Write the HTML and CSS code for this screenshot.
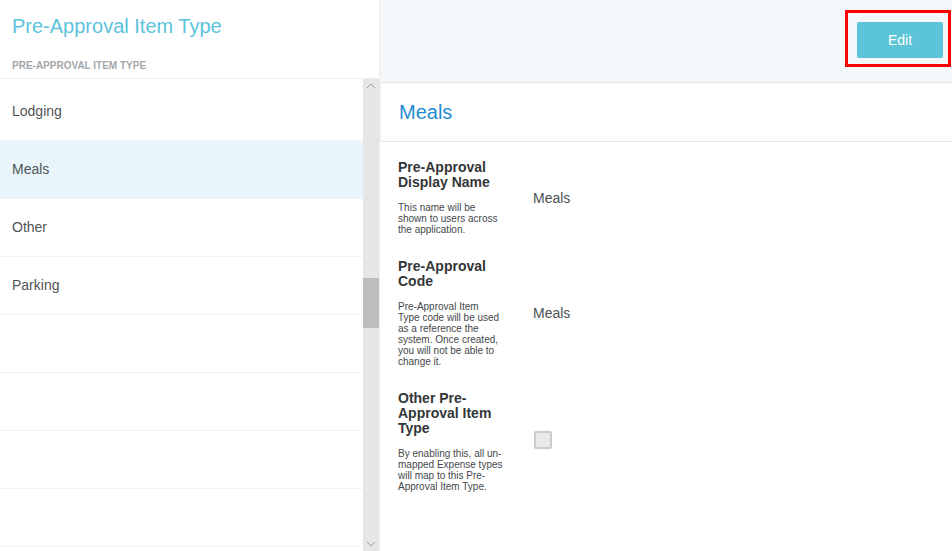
FILE: index.html
```html
<!DOCTYPE html>
<html lang="en">
<head>
<meta charset="utf-8">
<title>Pre-Approval Item Type</title>
<link rel="stylesheet" href="styles.css">
</head>
<body>
<div class="app">
  <aside class="sidebar">
    <header class="sidebar-head">
      <h1 class="sidebar-title">Pre-Approval Item Type</h1>
      <div class="sidebar-caption">PRE-APPROVAL ITEM TYPE</div>
    </header>
    <div class="list-wrap">
      <ul class="list">
        <li class="row">Lodging</li>
        <li class="row selected">Meals</li>
        <li class="row">Other</li>
        <li class="row">Parking</li>
        <li class="row"></li>
        <li class="row"></li>
        <li class="row"></li>
        <li class="row"></li>
      </ul>
      <div class="scrollbar">
        <svg class="arrow" width="16" height="14" viewBox="0 0 16 14"><path d="M4 9 L8 5 L12 9" fill="none" stroke="#9a9a9a" stroke-width="1"/></svg>
        <div class="thumb"></div>
        <div class="track-fill"></div>
        <svg class="arrow" width="16" height="14" viewBox="0 0 16 14"><path d="M4 5 L8 9 L12 5" fill="none" stroke="#9a9a9a" stroke-width="1"/></svg>
      </div>
    </div>
  </aside>

  <main class="main">
    <div class="topbar">
      <div class="focus-ring">
        <button class="btn-edit" type="button">Edit</button>
      </div>
    </div>

    <section class="card">
      <h2 class="card-title">Meals</h2>
    </section>

    <div class="fields">
      <div class="field">
        <div class="field-info">
          <div class="field-label">Pre-Approval Display Name</div>
          <div class="field-desc">This name will be shown to users across the application.</div>
        </div>
        <div class="field-value">Meals</div>
      </div>

      <div class="field">
        <div class="field-info">
          <div class="field-label">Pre-Approval Code</div>
          <div class="field-desc">Pre-Approval Item Type code will be used as a reference the system. Once created, you will not be able to change it.</div>
        </div>
        <div class="field-value">Meals</div>
      </div>

      <div class="field">
        <div class="field-info">
          <div class="field-label">Other Pre-Approval Item Type</div>
          <div class="field-desc">By enabling this, all un-mapped Expense types will map to this Pre-Approval Item Type.</div>
        </div>
        <div class="field-value"><span class="checkbox"></span></div>
      </div>
    </div>
  </main>
</div>
</body>
</html>
```

FILE: styles.css
```css
* {
  box-sizing: border-box;
}

html, body {
  margin: 0;
  padding: 0;
  background: #ffffff;
}

body {
  font-family: "Liberation Sans", Arial, sans-serif;
  color: #333;
  overflow: hidden;
}

.app {
  display: flex;
  height: 551px;
}

/* ---------- left list panel ---------- */
.sidebar {
  width: 380px;
  flex: none;
  display: flex;
  flex-direction: column;
  border-right: 1px solid #ececec;
}

.sidebar-head {
  height: 79px;
  padding: 13px 12px 0;
  border-bottom: 1px solid #efefef;
  display: flex;
  flex-direction: column;
}

.sidebar-title {
  margin: 0;
  font-size: 20px;
  line-height: 26px;
  font-weight: normal;
  color: #5bc2dc;
}

.sidebar-caption {
  margin-top: 21px;
  font-size: 10px;
  line-height: 12px;
  font-weight: bold;
  color: #a4a7aa;
}

.list-wrap {
  flex: 1;
  display: flex;
  min-height: 0;
}

.list {
  flex: 1;
  list-style: none;
  margin: 0;
  padding: 4px 0 0;
  overflow: hidden;
}

.row {
  height: 58px;
  padding-left: 12px;
  padding-bottom: 1px;
  display: flex;
  align-items: center;
  border-bottom: 1px solid #f1f2f3;
  font-size: 14px;
  color: #505558;
}

.row.selected {
  background: #e8f6fb;
}

.scrollbar {
  width: 16px;
  flex: none;
  background: #e6e6e6;
  display: flex;
  flex-direction: column;
  align-items: center;
}

.arrow {
  display: block;
  flex: none;
}

.thumb {
  width: 16px;
  height: 50px;
  margin-top: 185px;
  background: #bdbdbd;
}

.track-fill {
  flex: 1;
}

/* ---------- right detail panel ---------- */
.main {
  flex: 1;
  display: flex;
  flex-direction: column;
}

.topbar {
  height: 83px;
  background: #f4f7fa;
  border-bottom: 1px solid #e4e7ea;
  display: flex;
  justify-content: flex-end;
  align-items: flex-start;
  padding: 10px 1px 0 0;
}

.focus-ring {
  border: 3px solid #ff0000;
  padding: 9px 5px 6px 9px;
}

.btn-edit {
  display: block;
  width: 86px;
  height: 36px;
  border: 0;
  border-radius: 2px;
  background: #5bc4d7;
  color: #ffffff;
  font-family: "Liberation Sans", Arial, sans-serif;
  font-size: 14px;
  padding: 0;
}

.card {
  height: 59px;
  border-left: 1px solid #eceeef;
  border-bottom: 1px solid #e6e8ea;
  padding-left: 18px;
  display: flex;
  align-items: center;
}

.card-title {
  margin: 0;
  font-size: 20px;
  font-weight: normal;
  color: #1f8bd2;
}

.fields {
  padding: 18px 0 0 18px;
  display: flex;
  flex-direction: column;
  gap: 24px;
}

.field {
  display: grid;
  grid-template-columns: 104.5px 1fr;
  column-gap: 30.5px;
  align-items: center;
}

.field-label {
  font-size: 14px;
  line-height: 15px;
  font-weight: bold;
  color: #333638;
}

.field-desc {
  margin-top: 12px;
  font-size: 10px;
  line-height: 11px;
  color: #44484b;
}

.field-value {
  font-size: 14px;
  color: #4b4f52;
}

.checkbox {
  display: block;
  width: 18px;
  height: 18px;
  margin: -4px 0 0 1px;
  border: 2px solid #c9cbcd;
  border-radius: 2px;
  background: #e7e9eb;
}
```
